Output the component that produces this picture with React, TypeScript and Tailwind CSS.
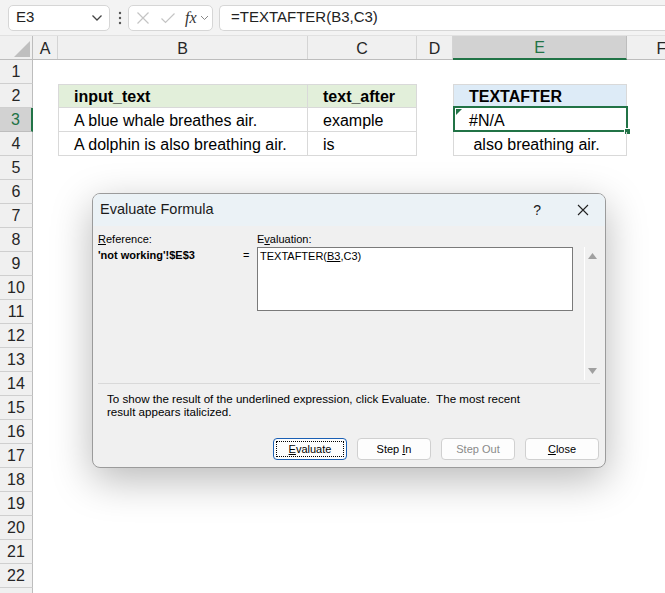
import React from 'react'

type Cell = { text: string; bold?: boolean; bg?: string; table?: boolean; first?: boolean; top?: boolean; selected?: boolean }

const columns = [
  { key: 'A', w: 'w-[25px]' },
  { key: 'B', w: 'w-[250px]' },
  { key: 'C', w: 'w-[109px]' },
  { key: 'D', w: 'w-[36px]' },
  { key: 'E', w: 'w-[174px]' },
  { key: 'F', w: 'w-[70px]' },
]

const data: Record<number, Record<string, Cell>> = {
  2: {
    B: { text: 'input_text', bold: true, bg: 'bg-[#e2efda]', table: true, first: true, top: true },
    C: { text: 'text_after', bold: true, bg: 'bg-[#e2efda]', table: true, top: true },
    E: { text: 'TEXTAFTER', bold: true, bg: 'bg-[#ddebf7]', table: true, first: true, top: true },
  },
  3: {
    B: { text: 'A blue whale breathes air.', table: true, first: true },
    C: { text: 'example', table: true },
    E: { text: '#N/A', table: true, first: true, selected: true },
  },
  4: {
    B: { text: 'A dolphin is also breathing air.', table: true, first: true },
    C: { text: 'is', table: true },
    E: { text: ' also breathing air.', table: true, first: true },
  },
}

const rows = Array.from({ length: 22 }, (_, i) => i + 1)

const FormulaBar = () => (
  <div className="h-[36px] bg-[#f3f3f3] flex items-center pl-[8px] border-b border-[#e1e1e1]">
    <div className="w-[102px] h-[26px] bg-white border border-[#d6d6d6] rounded-[5px] flex items-center pl-[7px] pr-[6px] text-[15px] text-[#222]">
      <span>E3</span>
      <svg className="ml-auto" width="12" height="8" viewBox="0 0 12 8">
        <path d="M1.5 1.5 L6 6 L10.5 1.5" fill="none" stroke="#444" strokeWidth="1.3" />
      </svg>
    </div>
    <svg className="ml-[7px]" width="6" height="16" viewBox="0 0 6 16">
      <circle cx="3" cy="3" r="1.2" fill="#555" />
      <circle cx="3" cy="8" r="1.2" fill="#555" />
      <circle cx="3" cy="13" r="1.2" fill="#555" />
    </svg>
    <div className="ml-[5px] w-[85px] h-[26px] bg-white border border-[#d6d6d6] rounded-[5px] flex items-center pl-[7px]">
      <svg width="14" height="14" viewBox="0 0 14 14">
        <path d="M1.5 1.5 L12.5 12.5 M12.5 1.5 L1.5 12.5" stroke="#c4c4c4" strokeWidth="1.2" />
      </svg>
      <svg className="ml-[10px]" width="16" height="14" viewBox="0 0 16 14">
        <path d="M1.5 7.5 L5.5 11.5 L14.5 2.5" fill="none" stroke="#c4c4c4" strokeWidth="1.2" />
      </svg>
      <span className="ml-[9px] italic text-[16px] text-[#333] font-['Liberation_Serif',serif] leading-none">fx</span>
      <svg className="ml-[3px]" width="9" height="6" viewBox="0 0 9 6">
        <path d="M1 1 L4.5 4.5 L8 1" fill="none" stroke="#888" strokeWidth="1" />
      </svg>
    </div>
    <div className="ml-[6px] flex-1 h-[26px] bg-white border border-[#d6d6d6] border-r-0 rounded-l-[5px] flex items-center pl-[11px] text-[15px] text-[#222]">
      =TEXTAFTER(B3,C3)
    </div>
  </div>
)

const ColumnHeader = () => (
  <div className="h-[24px] flex bg-[#f0f0f0] border-b border-[#bdbdbd] text-[16px] text-[#262626]">
    <div className="w-[33px] shrink-0 border-r border-[#bdbdbd] relative">
      <svg className="absolute left-[14px] top-[5px]" width="16" height="16" viewBox="0 0 16 16">
        <path d="M16 0 L16 16 L0 16 Z" fill="#bfbfbf" />
      </svg>
    </div>
    {columns.map((c) =>
      c.key === 'E' ? (
        <div key={c.key} className={`${c.w} shrink-0 -mb-px pt-[2px] bg-[#d2d2d2] border-r border-[#bdbdbd] border-b-2 border-b-[#217346] flex items-center justify-center text-[#217346]`}>
          {c.key}
        </div>
      ) : (
        <div key={c.key} className={`${c.w} shrink-0 pt-[3px] border-r border-[#d4d4d4] flex items-center justify-center`}>
          {c.key}
        </div>
      )
    )}
  </div>
)

const SheetCell = ({ w, cell }: { w: string; cell?: Cell }) => {
  if (!cell) return <div className={`${w} shrink-0 h-full`} />
  return (
    <div
      className={`${w} shrink-0 h-full relative flex items-center pl-[15px] pt-[2px] whitespace-pre text-[16px] text-black ${cell.bg ?? ''} ${
        cell.table ? 'border-r border-b border-[#d9d9d9]' : ''
      } ${cell.first ? 'border-l' : ''} ${cell.top ? 'border-t' : ''} ${cell.bold ? 'font-bold' : ''}`}
    >
      {cell.text}
      {cell.selected && (
        <div className="absolute -left-px -top-[2px] -right-[2px] -bottom-px border-2 border-[#217346]">
          <svg className="absolute left-[1px] top-[1px]" width="6" height="6" viewBox="0 0 6 6">
            <path d="M0 0 L6 0 L0 6 Z" fill="#217346" />
          </svg>
          <div className="absolute -right-[5px] -bottom-[5px] w-[7px] h-[7px] bg-[#217346] border border-white" />
        </div>
      )}
    </div>
  )
}

const Sheet = () => (
  <div>
    {rows.map((r) => (
      <div key={r} className="h-[24px] flex">
        <div
          className={`w-[33px] shrink-0 flex items-center justify-center pt-[1px] text-[16px] border-b ${
            r === 3
              ? 'bg-[#d2d2d2] text-[#217346] border-r-2 border-r-[#217346] border-b-[#bdbdbd]'
              : 'bg-[#f0f0f0] text-[#262626] border-r border-r-[#bdbdbd] border-b-[#cfcfcf]'
          }`}
        >
          {r}
        </div>
        {columns.map((c) => (
          <SheetCell key={c.key} w={c.w} cell={data[r]?.[c.key]} />
        ))}
      </div>
    ))}
    {/* row 23, only its top edge is in view */}
    <div className="h-[24px] flex">
      <div className="w-[33px] shrink-0 bg-[#f0f0f0] border-r border-[#bdbdbd]" />
    </div>
  </div>
)

const Btn = ({ children, disabled, focused }: { children: React.ReactNode; disabled?: boolean; focused?: boolean }) => (
  <div
    className={`w-[74px] h-[22px] rounded-[4px] bg-[#fdfdfd] flex items-center justify-center text-[11px] ${
      focused ? 'border border-[#1a5fb4] p-[2px]' : 'border border-[#d0d0d0]'
    } ${disabled ? 'text-[#8a8a8a]' : 'text-black'}`}
  >
    {focused ? (
      <div className="w-full h-full border border-dotted border-black flex items-center justify-center">
        <span>{children}</span>
      </div>
    ) : (
      <span>{children}</span>
    )}
  </div>
)

const Dialog = () => (
  <div className="absolute left-[92px] top-[193px] w-[514px] h-[275px] rounded-[8px] border border-[#9b9b9b] bg-[#f0f0f0] overflow-hidden flex flex-col shadow-[0_12px_40px_rgba(0,0,0,0.28)] font-['Liberation_Sans',sans-serif]">
    <div className="h-[32px] shrink-0 bg-[#ebf2f6] flex items-center pl-[7px] pr-[16px]">
      <span className="text-[14.5px] text-[#1b1b1b]">Evaluate Formula</span>
      <span className="ml-auto text-[14px] text-[#1b1b1b]">?</span>
      <svg className="ml-[36px]" width="12" height="12" viewBox="0 0 12 12">
        <path d="M1 1 L11 11 M11 1 L1 11" stroke="#222" strokeWidth="1.1" />
      </svg>
    </div>
    <div className="flex pl-[5px] pt-[5px] text-[11px] text-black leading-[16px]">
      <div className="w-[142px]">
        <div>
          <span className="underline">R</span>eference:
        </div>
        <div className="font-bold">'not working'!$E$3</div>
      </div>
      <div className="w-[17px] pt-[16px] pl-[3px]">=</div>
      <div className="w-[316px]">
        <div>
          E<span className="underline">v</span>aluation:
        </div>
        <div className="h-[64px] bg-white border border-[#7a7a7a] pl-[2px]">
          TEXTAFTER(<span className="underline">B3</span>,C3)
        </div>
      </div>
      <div className="ml-[11px] mt-[16px] w-[16px] h-[133px] border-l border-white flex flex-col items-center justify-between py-[6px]">
        <svg width="9" height="6" viewBox="0 0 9 6">
          <path d="M4.5 0 L9 6 L0 6 Z" fill="#a0a0a0" />
        </svg>
        <svg width="9" height="6" viewBox="0 0 9 6">
          <path d="M0 0 L9 0 L4.5 6 Z" fill="#a0a0a0" />
        </svg>
      </div>
    </div>
    <div className="mx-[5px] mt-[3px] border-t border-[#d9d9d9]" />
    <div className="pl-[14px] pt-[8px] text-[11.6px] leading-[13px] text-black">
      <div className="whitespace-pre">To show the result of the underlined expression, click Evaluate.  The most recent</div>
      <div>result appears italicized.</div>
    </div>
    <div className="mt-[20px] pr-[6px] flex justify-end gap-[10px]">
      <Btn focused>
        <span className="underline">E</span>valuate
      </Btn>
      <Btn>
        Step <span className="underline">I</span>n
      </Btn>
      <Btn disabled>Step Out</Btn>
      <Btn>
        <span className="underline">C</span>lose
      </Btn>
    </div>
  </div>
)

export default function App() {
  return (
    <div className="w-[665px] h-[593px] overflow-hidden bg-white relative font-['Liberation_Sans',sans-serif]">
      <FormulaBar />
      <ColumnHeader />
      <Sheet />
      <Dialog />
    </div>
  )
}
